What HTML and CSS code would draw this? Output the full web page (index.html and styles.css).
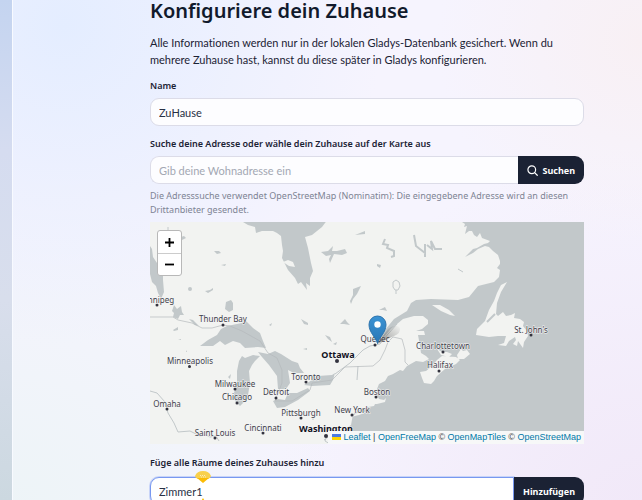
FILE: index.html
```html
<!DOCTYPE html>
<html lang="de">
<head>
<meta charset="utf-8">
<meta name="viewport" content="width=device-width, initial-scale=1">
<title>Konfiguriere dein Zuhause</title>
<link rel="stylesheet" href="styles.css">
</head>
<body>
<main class="panel">
  <form class="setup">
    <h1 class="title">Konfiguriere dein Zuhause</h1>
    <p class="intro">Alle Informationen werden nur in der lokalen Gladys-Datenbank gesichert. Wenn du mehrere Zuhause hast, kannst du diese später in Gladys konfigurieren.</p>

    <div class="field">
      <label class="label" for="name">Name</label>
      <input class="input" id="name" type="text" value="ZuHause">
    </div>

    <div class="field">
      <label class="label" for="address">Suche deine Adresse oder wähle dein Zuhause auf der Karte aus</label>
      <div class="group">
        <input class="input" id="address" type="text" placeholder="Gib deine Wohnadresse ein">
        <button class="button" type="button">
          <svg class="icon" viewBox="0 0 12 12" aria-hidden="true"><circle cx="5.2" cy="5.2" r="4.2"/><path d="M8.3 8.3 11.2 11.2"/></svg>
          Suchen
        </button>
      </div>
      <p class="help">Die Adresssuche verwendet OpenStreetMap (Nominatim): Die eingegebene Adresse wird an diesen Drittanbieter gesendet.</p>
    </div>

    <div class="map">
      <svg class="map-canvas" viewBox="150 222 434 222" role="img" aria-label="Karte">
        <defs>
          <linearGradient id="pin" x2="0" y2="1"><stop stop-color="#3a93d4"/><stop offset="1" stop-color="#2a76b5"/></linearGradient>
          <linearGradient id="shade" x1="0" y1="1" x2="1" y2="0"><stop stop-color="#444" stop-opacity=".55"/><stop offset="1" stop-color="#444" stop-opacity="0"/></linearGradient>
        </defs>
        <rect class="land" x="150" y="222" width="434" height="222"/>
        <g class="water">
          <!-- Hudson and James Bay -->
          <path d="M243 222l5 3 7 2 1 6 6-2 11 0 4 2 4 3 1 9 1 6-1 7 3 6 3 6 7 8 3 6 3-2 6 8-1-7 4 3 0-8 3-7-2-8-3-15-3-11 7-2 10-8 6-8z"/>
          <!-- Atlantic and Gulf of Saint Lawrence -->
          <path d="M462 222l3 2-1 3 3-1-2 8 4-3 3 0 2 4 3 2 3-4 2 5 8 3-2 2-4 1-7 4-4 1-8 8 8-4 5-4 7-3 4 1 4 4 5 4 2 6 0 3-3 4 3 2-1 7-5 5-16 4-9 11-11 3-27-1-15 1-5 3-4 8-13 8-9 11-8 9 7-2 7-8 6-5 6-5 11-3 9 0 5 4 0 4-6 5-6 2 8 0 1 4-7 0 2 11 1 7 5 3 3 3-6 3-7-1-9 5-4 5-3-1-7 4-5 2-3 5-6 3-2 5 0 6 2 4 5 1 2-2-1 4-8 2-2 0-1 2-6 1-8 3-7 4-2 11-3 2 1 12H584V222z"/>
          <!-- Great Lakes -->
          <path d="M200 346L208 340 217 335 221 329 227 326 242 323 245 320 253 328 260 333 263 341 266 348 258 347 245 348 240 343 233 341 225 345 220 341 213 346z"/>
          <path d="M253 355L260 356 255 361 252 365 249 371 250 383 248 395 245 401 240 406 235 401 234 393 237 383 237 371 239 361 242 356 245 358z"/>
          <path d="M258 352L268 354 275 351 281 354 292 361 298 363 300 368 304 373 294 373 288 370 290 383 286 389 278 389 277 376 269 365 262 357z"/>
          <path d="M273 401L278 399 285 400 288 393 297 393 308 388 310 391 298 400 285 407 277 408z"/>
          <path d="M304 385L312 380 318 376 332 375 335 373 333 380 330 385 312 386z"/>
          <!-- Inland lakes -->
          <path d="M150 246l2 3 1 8 4 6 1 7 5 4 0 6 1 12-3 7-3-6-2-7-4-4-2-8z"/>
          <path d="M174 305l3 4 4-3 1 6 2 3-4 0-2 4-5-2 1-4-2-2zM226 302l5-2 2 3 0 7-4 2-4-3zM188 289a2 2 0 1 0 4 0 2 2 0 1 0-4 0M205 291l5-1 3-2 0 2-5 3zM214 251l5 0 2 2-4 1zM221 265l5-1-1 2zM181 237l3-1 2 2-4 2zM173 330l5-3 0 3-4 1zM189 319l4 1 6 6-4-1z"/>
          <path d="M321 252l7-1 5-5-1 5 5 0 8-2 2 4-5 2-8-1-4 9-1-4 2-4-5 1zM355 235l10-4v3zM353 289l8-3-4 8-4 5-2 5-1-3 3-6zM301 319l7 4v2l-4-1zM340 324l5-5 2 3 3 3-6-1zM303 349l4-1v2zM269 325l3-2-1 3zM377 264l4 1-1 3-3-2zM379 310l6-3 2 4-4-1zM325 335l5 2 2 5-4-3zM333 344l4-2-1 3zM228 377l3-3-1 5zM178 340l3-1v1zM186 350l1 2-1 0z"/>
        </g>
        <g class="stream stream-wide">
          <path d="M385 239l-2 5 5 1-1 3 7 3 0 5-3 1M414 235l2 11 9 7 0-9M425 252v5M427 245l5 4-1-8 4 8 7 0"/>
        </g>
        <g class="stream">
          <path d="M393 282l3-2 3 2 1 4-2 4-3 0-2-3zM396 290v4M458 269l5 3M168 227v3M358 366l-1 14M313 416v4M327 435l-2 6 5 3M324 440l4-3"/>
          <path d="M150 391l7 2 8 9 3 11 6 10 4 9 12-1 10 5 6-1 4 2 6-1 3 5"/>
          <path d="M335 374L350 363 363 350 370 346 380 344 388 334 397 324"/>
        </g>
        <g class="land">
          <path d="M283 262l5-2 5 2 2 5-6-1z"/>
          <path d="M432 305l8 0 9 5 6 6-5-1-9-4z"/>
          <path d="M507 282l-6 3-4 8-3 8-5 9-4 11-8 8-1 6 13 2 9-1 8 0-2 7-6 2 8 1 3-5 6-4 1 3-3 4 4 2 1-5 5 7 1-6 4-6-1-5-4-5 1-4-4-3-6-1 1-5-4 2-5 1-3-4-5 4-2-2 1-11 4-11z"/>
          <path d="M437 349l5 3 5 0 5 2-3 3-8-2zM420 372l6-1 6-5 5-6 5-4 14 1 4 3-4 4-11 5-8 7-3 5-3 3-7-1-2-5zM457 355l4-6 2 2 4-1 3 4-6 5-6 0z"/>
          <path d="M351 417l6-4 10-1-8 3z"/>
        </g>
        <path class="stream stream-wide" d="M487 322l8-8"/>
        <g class="border-line">
          <path d="M150 317H173L178 320 192 323 202 328 212 328 223 325 230 326 242 331 260 341 268 353 277 358 282 370 282 383 275 401 292 401 310 390 312 383 332 380 345 367 373 366 380 360 385 350 388 342 393 337 402 339 405 350 405 362 408 365"/>
        </g>
        <g class="dots">
          <circle cx="157" cy="305" r="1.5"/><circle cx="223" cy="325" r="1.5"/><circle cx="189.500" cy="366.500" r="1.500"/><circle cx="235" cy="389" r="1.500"/><circle cx="237" cy="403" r="1.500"/><circle cx="276" cy="398" r="1.500"/><circle cx="306" cy="382" r="1.500"/><circle cx="167" cy="409" r="1.500"/><circle cx="215" cy="438" r="1.500"/><circle cx="263" cy="433" r="1.500"/><circle cx="301" cy="418" r="1.500"/><circle cx="352" cy="415" r="1.500"/><circle cx="376" cy="397" r="1.500"/><circle cx="443" cy="352" r="1.500"/><circle cx="439" cy="371" r="1.500"/><circle cx="531" cy="335" r="1.500"/><circle cx="375" cy="345" r="1.500"/><circle cx="337" cy="361" r="2"/><circle cx="326" cy="436" r="2"/>
        </g>
        <g class="places">
          <text x="161" y="303">nnipeg</text>
          <text x="223" y="322">Thunder Bay</text>
          <text x="190" y="364">Minneapolis</text>
          <text x="235" y="387">Milwaukee</text>
          <text x="237" y="400">Chicago</text>
          <text x="276" y="395">Detroit</text>
          <text x="306" y="380">Toronto</text>
          <text x="167" y="407">Omaha</text>
          <text x="215" y="436">Saint Louis</text>
          <text x="263" y="431">Cincinnati</text>
          <text x="301" y="416">Pittsburgh</text>
          <text x="352" y="413">New York</text>
          <text x="377" y="395">Boston</text>
          <text x="443" y="349">Charlottetown</text>
          <text x="440" y="368">Halifax</text>
          <text x="531" y="333">St. John's</text>
          <text x="375" y="342">Québec</text>
          <text class="capital" x="338" y="358">Ottawa</text>
          <text class="capital" x="326" y="432">Washington</text>
        </g>
        <path fill="url(#shade)" d="M377 344l11-15q8-6 12-1 1 5-6 8z"/>
        <path fill="url(#pin)" stroke="#2b72ac" d="M377.500 343.500c-1.500-6-8.500-11-8.500-19a8.500 8.500 0 0 1 17 0c0 8-7 13-8.500 19z"/>
        <circle cx="377.500" cy="324.500" r="3.200" fill="#fff"/>
      </svg>
      <div class="zoom">
        <button class="zoom-button" type="button" aria-label="Vergrößern"><svg class="zoom-icon" viewBox="0 0 10 10"><path d="M0 5h10M5 0v10"/></svg></button>
        <button class="zoom-button" type="button" aria-label="Verkleinern"><svg class="zoom-icon" viewBox="0 0 10 10"><path d="M0 5h10"/></svg></button>
      </div>
      <div class="attribution">
        <a href="#leaflet"><svg class="flag" viewBox="0 0 9 6" aria-hidden="true"><path fill="#4c7be1" d="M0 0h9v3H0z"/><path fill="#ffd500" d="M0 3h9v3H0z"/></svg> Leaflet</a> | <a href="#ofm">OpenFreeMap</a> © <a href="#omt">OpenMapTiles</a> © <a href="#osm">OpenStreetMap</a>
      </div>
    </div>

    <div class="field field-rooms">
      <label class="label" for="room">Füge alle Räume deines Zuhauses hinzu</label>
      <div class="group">
        <input class="input input-active" id="room" type="text" value="Zimmer1">
        <button class="button" type="button">Hinzufügen</button>
        <svg class="handle" viewBox="0 0 16 32" aria-hidden="true"><path fill="#f8d04c" d="M0 5Q2 0 8 0t8 5q0 2-3 3H3Q0 7 0 5z"/><path fill="#fbbc05" d="M2 7h12l-6 5zM8 27l3 5H5z"/><path stroke="#fff" stroke-width=".6" stroke-dasharray="1" d="M5 4.500h6M6 6h5"/></svg>
      </div>
    </div>
  </form>
</main>
</body>
</html>
```
FILE: styles.css
```css
* {
  box-sizing: border-box;
}

body {
  margin: 0;
  height: 100vh;
  overflow: hidden;
  padding-left: 12px;
  background: linear-gradient(#c4d4f0, #d5dcf0 30%, #d8deec 60%, #ccd8e0);
  color: #1b2234;
  font-family: "Noto Sans", sans-serif;
}

.panel {
  min-height: 100vh;
  padding: 0 58px 0 137px;
  border-left: 1px solid #f8faff;
  background:
    radial-gradient(circle at 8% 5%, #e4edff, #e4edff00 42%),
    radial-gradient(circle at 100% 8%, #f8f0f4, #f8f0f400 26%),
    radial-gradient(circle at 0 100%, #edf4f7, #edf4f700 40%),
    radial-gradient(circle at 100% 100%, #f1e8f8, #f1e8f800 45%),
    #f6f4fe;
}

.setup {
  display: flex;
  flex-direction: column;
}

.title {
  margin: 0;
  color: #111a2c;
  font-size: 20px;
  font-weight: 600;
  line-height: 22px;
}

.intro {
  margin: 12px 0 11px;
  font-family: Lato, "Noto Sans", sans-serif;
  font-size: 11px;
  font-variant-ligatures: none;
  line-height: 17px;
}

.field {
  display: flex;
  flex-direction: column;
  margin-bottom: 11px;
}

.label {
  margin-bottom: 5px;
  font-size: 9px;
  font-weight: 600;
  line-height: 14px;
}

.field-rooms .label {
  margin-bottom: 7px;
}

.input {
  width: 100%;
  min-width: 0;
  height: 28px;
  padding: 0 8px;
  border: 1px solid #dcdce8;
  border-radius: 9px;
  outline: 0;
  background: #fdfdff;
  color: #283044;
  font: 11px Lato, "Noto Sans", sans-serif;
}

.input::placeholder {
  color: #a3a8b3;
}

.group {
  position: relative;
  display: flex;
}

.group .input {
  flex: 1;
  border-right: 0;
  border-radius: 9px 0 0 9px;
}

.group .input-active {
  border: 1px solid #7898f0;
  background: #fff;
  box-shadow: 0 0 0 1px #c8d4f8;
}

.button {
  display: flex;
  align-items: center;
  gap: 4px;
  height: 28px;
  padding: 0 9px;
  border: 0;
  border-radius: 0 9px 9px 0;
  background: #1b2234;
  color: #fff;
  font: 700 9px "Noto Sans", sans-serif;
}

.icon {
  width: 11px;
  height: 11px;
  fill: none;
  stroke: #fff;
  stroke-width: 1.3;
  stroke-linecap: round;
}

.help {
  margin: 5px 0 0;
  color: #7e8494;
  font-size: 9px;
  line-height: 14px;
}

.map {
  position: relative;
  margin: -6px 0 12px;
}

.map-canvas {
  display: block;
  width: 100%;
}

.land {
  fill: #f2f3f1;
}

.water {
  fill: #c2c8ca;
}

.stream,
.border-line {
  fill: none;
  stroke: #c2c8ca;
}

.stream-wide {
  stroke-width: 2px;
}

.border-line {
  stroke: #b4b9bb;
  stroke-width: 0.7px;
}

.dots {
  fill: #33333f;
}

.places {
  fill: #3f3f4b;
  stroke: #f5f5f5;
  stroke-width: 1px;
  paint-order: stroke;
  font-size: 8px;
  text-anchor: middle;
}

.capital {
  fill: #111122;
  font-size: 9px;
  font-weight: 700;
}

.zoom {
  position: absolute;
  top: 8px;
  left: 7px;
  border: 1px solid #b8b8b8;
  border-radius: 3px;
  background: #fff;
}

.zoom-button {
  display: grid;
  place-items: center;
  width: 23px;
  height: 22px;
  padding: 0;
  border: 0;
  background: none;
}

.zoom-button + .zoom-button {
  border-top: 1px solid #ccc;
}

.zoom-icon {
  width: 9px;
  height: 9px;
  stroke: #000;
  stroke-width: 2;
}

.attribution {
  position: absolute;
  right: 0;
  bottom: 0;
  padding: 0 3px 0 4px;
  background: #f7f8f8;
  color: #444;
  font: 9px/13px "Liberation Sans", sans-serif;
  white-space: nowrap;
}

.attribution a {
  color: #0078a8;
  text-decoration: none;
}

.flag {
  width: 9px;
  height: 6px;
}

.handle {
  position: absolute;
  top: -6px;
  left: 45px;
  width: 16px;
  height: 32px;
}
```
